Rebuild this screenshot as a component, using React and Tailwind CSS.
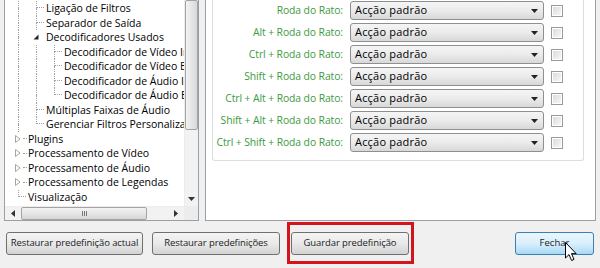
import React from "react";

// linhas da árvore: g = guias por nível
const treeRows = [
  { g: ["line", "tee"], label: "Ligação de Filtros" },
  { g: ["line", "tee"], label: "Separador de Saída" },
  { g: ["line", "open"], label: "Decodificadores Usados" },
  { g: ["line", "line", "tee"], label: "Decodificador de Vídeo Interno" },
  { g: ["line", "line", "tee"], label: "Decodificador de Vídeo Externo" },
  { g: ["line", "line", "tee"], label: "Decodificador de Áudio Interno" },
  { g: ["line", "line", "end"], label: "Decodificador de Áudio Externo" },
  { g: ["line", "tee"], label: "Múltiplas Faixas de Áudio" },
  { g: ["line", "end"], label: "Gerenciar Filtros Personalizados" },
  { g: ["closed"], label: "Plugins" },
  { g: ["closed"], label: "Processamento de Vídeo" },
  { g: ["closed"], label: "Processamento de Áudio" },
  { g: ["closed"], label: "Processamento de Legendas" },
  { g: ["end"], label: "Visualização" },
];

const wheelRows = [
  "Roda do Rato:",
  "Alt + Roda do Rato:",
  "Ctrl + Roda do Rato:",
  "Shift + Roda do Rato:",
  "Ctrl + Alt + Roda do Rato:",
  "Shift + Alt + Roda do Rato:",
  "Ctrl + Shift + Roda do Rato:",
];

function Guide({ type }) {
  if (type === "closed") {
    return (
      <div className="flex w-[18px] shrink-0 items-center pl-[5px]">
        <svg width="6" height="8" viewBox="0 0 6 8">
          <path d="M0.5 0.5 L5 4 L0.5 7.5 Z" fill="white" stroke="#a6a6a6" />
        </svg>
        <div className="ml-[2px] w-[4px] border-t border-dotted border-[#a0a0a0]" />
      </div>
    );
  }
  if (type === "open") {
    return (
      <div className="flex w-[18px] shrink-0 items-center pl-[5px]">
        <svg width="6" height="6" viewBox="0 0 6 6">
          <path d="M5.5 0.5 L5.5 5.5 L0.5 5.5 Z" fill="#262626" />
        </svg>
      </div>
    );
  }
  return (
    <div className="grid w-[18px] shrink-0 grid-cols-[9px_9px] grid-rows-2">
      <div className="border-r border-dotted border-[#a0a0a0]" />
      <div className={type === "line" ? "" : "border-b border-dotted border-[#a0a0a0] mr-[2px]"} />
      <div className={type === "end" ? "" : "border-r border-dotted border-[#a0a0a0]"} />
      <div />
    </div>
  );
}

function Button({ children, className = "" }) {
  return (
    <button className={`h-[23px] whitespace-nowrap rounded-[3px] border border-[#707070] bg-linear-to-b from-[#f4f4f4] via-[#e9e9e9] to-[#d3d3d3] text-[9.5px] tracking-[-0.1px] text-[#1a1a1a] ${className}`}>
      {children}
    </button>
  );
}

export default function App() {
  return (
    <div className="relative flex h-[268px] w-[600px] flex-col overflow-hidden bg-[#f0f0f0] font-['Open_Sans',sans-serif] text-black">
      <div className="flex h-[221px] pl-[4px] pr-[4px]">
        {/* árvore de opções */}
        <div className="flex w-[195px] flex-col border border-t-0 border-[#9aa0a8] bg-white">
          <div className="flex min-h-0 flex-1">
            <div className="min-w-0 flex-1 overflow-hidden pl-[5px] pt-[1px]">
              {treeRows.map((row) => (
                <div key={row.label} className="flex h-[14.5px] items-stretch">
                  {row.g.map((t, i) => (
                    <Guide key={i} type={t} />
                  ))}
                  <span className="whitespace-nowrap text-[10.5px] leading-[14.5px]">{row.label}</span>
                </div>
              ))}
            </div>
            <div className="flex w-[14px] flex-col border-l border-[#ececec] bg-[#f2f2f2]">
              <div className="h-[130px] rounded-[2px] border border-[#a3a3a3] bg-linear-to-r from-[#f3f3f3] via-[#e6e6e6] to-[#d9d9d9]" />
              <div className="flex-1" />
              <div className="flex h-[15px] items-center justify-center">
                <svg width="7" height="4" viewBox="0 0 7 4"><path d="M0 0 L7 0 L3.5 4 Z" fill="#333" /></svg>
              </div>
            </div>
          </div>
          <div className="flex h-[14px] border-t border-[#ececec] bg-[#f2f2f2]">
            <div className="flex w-[16px] items-center justify-center">
              <svg width="4" height="7" viewBox="0 0 4 7"><path d="M4 0 L4 7 L0 3.5 Z" fill="#333" /></svg>
            </div>
            <div className="flex w-[126px] items-center justify-center rounded-[2px] border border-[#a3a3a3] bg-linear-to-b from-[#f3f3f3] via-[#e6e6e6] to-[#d6d6d6]">
              <div className="flex gap-[1px]">
                <div className="h-[5px] w-[1px] bg-[#777]" />
                <div className="h-[5px] w-[1px] bg-[#777]" />
                <div className="h-[5px] w-[1px] bg-[#777]" />
              </div>
            </div>
            <div className="flex-1" />
            <div className="flex w-[16px] items-center justify-center">
              <svg width="4" height="7" viewBox="0 0 4 7"><path d="M0 0 L0 7 L4 3.5 Z" fill="#333" /></svg>
            </div>
            <div className="w-[14px] bg-[#ececec]" />
          </div>
        </div>

        {/* painel direito */}
        <div className="ml-[6px] flex-1 border border-t-0 border-[#9aa0a8] bg-white pl-[6px]">
          <div className="flex w-[372px] flex-col gap-[3px] rounded-b-[3px] border border-t-0 border-[#d5dfe5] pb-[8px] pt-[1px]">
            {wheelRows.map((label) => (
              <div key={label} className="flex h-[19px] items-center">
                <span className="w-[130px] whitespace-nowrap text-right text-[10.4px] tracking-[-0.1px] text-[#3e9a3e]">{label}</span>
                <div className="ml-[7px] flex h-[19px] w-[194px] items-center justify-between rounded-[3px] border border-[#8e8f8f] bg-linear-to-b from-[#f5f5f5] via-[#ebebeb] to-[#d8d8d8] pl-[4px] pr-[5px]">
                  <span className="text-[11px] tracking-[0.2px]">Acção padrão</span>
                  <svg width="7" height="4" viewBox="0 0 7 4"><path d="M0 0 L7 0 L3.5 4 Z" fill="#222" /></svg>
                </div>
                <div className="ml-[7px] h-[12px] w-[12px] border border-[#9a9a9a] bg-white p-[1px]">
                  <div className="h-full w-full bg-linear-to-br from-[#dcdcdc] to-[#f6f6f6]" />
                </div>
              </div>
            ))}
          </div>
        </div>
      </div>

      {/* botões */}
      <div className="flex h-[47px] items-center pb-[4px] pl-[6px] pr-[6px] pt-[1px]">
        <Button className="w-[137px]">Restaurar predefinição actual</Button>
        <Button className="ml-[9px] w-[128px]">Restaurar predefinições</Button>
        <div className="ml-[7px] flex h-[42px] w-[127px] items-center border-[3px] border-[#d4141c] pl-[1px]">
          <Button className="w-[118px]">Guardar predefinição</Button>
        </div>
        <button className="ml-auto h-[23px] w-[79px] rounded-[3px] border border-[#3c7fb1] bg-linear-to-b from-[#eaf6fd] via-[#d9f0fc] to-[#a7d9f5] text-[9.5px] text-[#1a1a1a]">
          Fechar
        </button>
      </div>

      {/* cursor do rato */}
      <svg className="absolute left-[565px] top-[242px]" width="13" height="20" viewBox="0 0 13 20">
        <path d="M0.5 0.5 L0.5 16 L4 12.6 L6.6 18.5 L9 17.4 L6.5 11.6 L11.2 11.6 Z" fill="white" stroke="black" strokeWidth="1" strokeLinejoin="round" />
      </svg>
    </div>
  );
}
